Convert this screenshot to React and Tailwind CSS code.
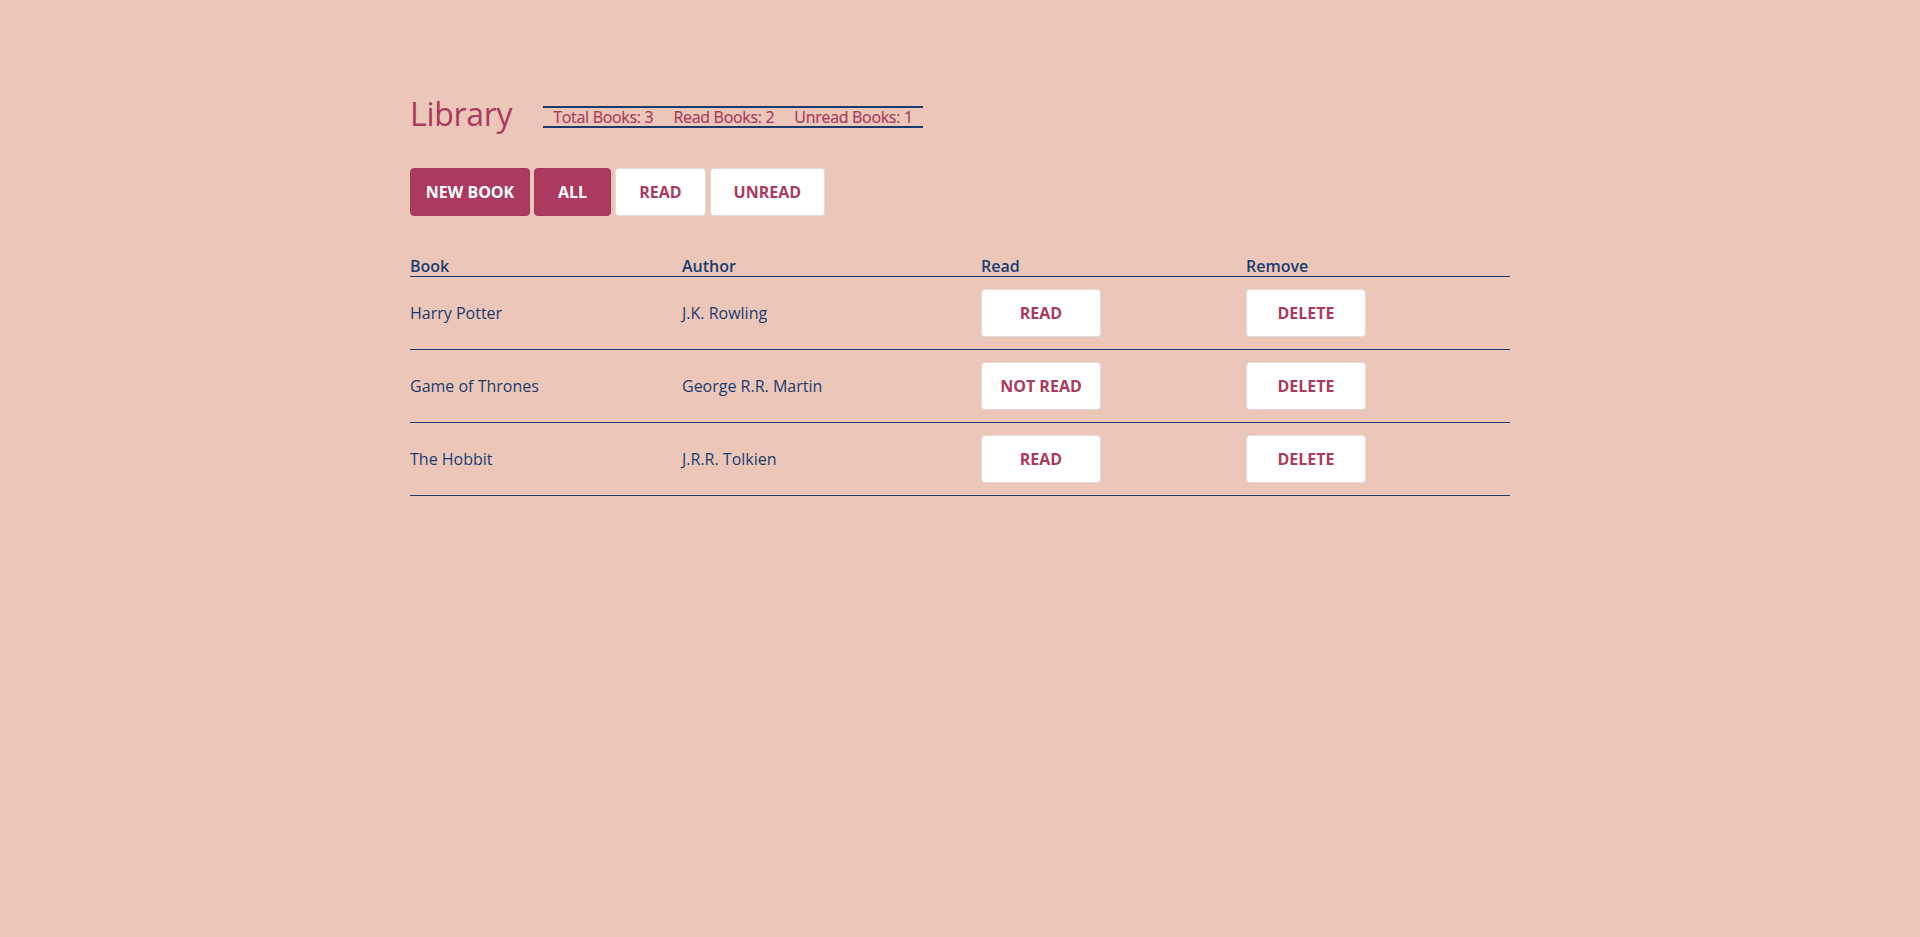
import React from "react";

const books = [
  { title: "Harry Potter", author: "J.K. Rowling", read: true },
  { title: "Game of Thrones", author: "George R.R. Martin", read: false },
  { title: "The Hobbit", author: "J.R.R. Tolkien", read: true },
];

function PinkButton({ children, className = "" }) {
  return (
    <button className={`h-12 rounded-[4px] border border-[#a3385b] bg-[#aa3a60] text-[16px] font-bold uppercase text-white ${className}`}>
      {children}
    </button>
  );
}

function WhiteButton({ children, className = "" }) {
  return (
    <button className={`h-12 rounded-[4px] border border-[#e2dcdc] bg-white text-[16px] font-bold uppercase text-[#a93a60] ${className}`}>
      {children}
    </button>
  );
}

export default function App() {
  const total = books.length;
  const readCount = books.filter((b) => b.read).length;

  return (
    <div className="min-h-screen bg-[#ecc7b9] font-['Open_Sans',sans-serif]">
      <div className="mx-auto w-[1100px] pt-[94px]">
        {/* header */}
        <div className="flex items-start">
          <h1 className="mr-[31px] text-[32px] leading-[40px] tracking-[-0.3px] text-[#aa3a60]">Library</h1>
          <div className="mt-3 flex border-y-2 border-[#1b3b6f] text-[16px] leading-[18px] tracking-[-0.3px] text-[#aa3a60] [-webkit-text-stroke:0.2px_#aa3a60]">
            <span className="px-2.5">Total Books: {total}</span>
            <span className="px-2.5">Read Books: {readCount}</span>
            <span className="px-2.5">Unread Books: {total - readCount}</span>
          </div>
        </div>

        {/* actions */}
        <div className="mt-[34px] flex gap-1">
          <PinkButton className="w-[120px]">New Book</PinkButton>
          <PinkButton className="px-[23px]">All</PinkButton>
          <WhiteButton className="px-[23px]">Read</WhiteButton>
          <WhiteButton className="px-[23px]">Unread</WhiteButton>
        </div>

        {/* table */}
        <table className="mt-10 w-[1100px] table-fixed border-collapse text-left text-[16px] text-[#1b3b6f]">
          <colgroup>
            <col className="w-[272px]" />
            <col className="w-[299px]" />
            <col className="w-[265px]" />
            <col className="w-[264px]" />
          </colgroup>
          <thead>
            <tr className="border-b border-[#1b3b6f]">
              <th className="p-0 font-semibold leading-5">Book</th>
              <th className="p-0 font-semibold leading-5">Author</th>
              <th className="p-0 font-semibold leading-5">Read</th>
              <th className="p-0 font-semibold leading-5">Remove</th>
            </tr>
          </thead>
          <tbody>
            {books.map((book, i) => (
              <tr key={i} className="border-b border-[#1b3b6f]">
                <td className="px-0 py-3">{book.title}</td>
                <td className="px-0 py-3">{book.author}</td>
                <td className="px-0 py-3">
                  <WhiteButton className="w-[120px]">{book.read ? "Read" : "Not Read"}</WhiteButton>
                </td>
                <td className="px-0 py-3">
                  <WhiteButton className="w-[120px]">Delete</WhiteButton>
                </td>
              </tr>
            ))}
          </tbody>
        </table>
      </div>
    </div>
  );
}
